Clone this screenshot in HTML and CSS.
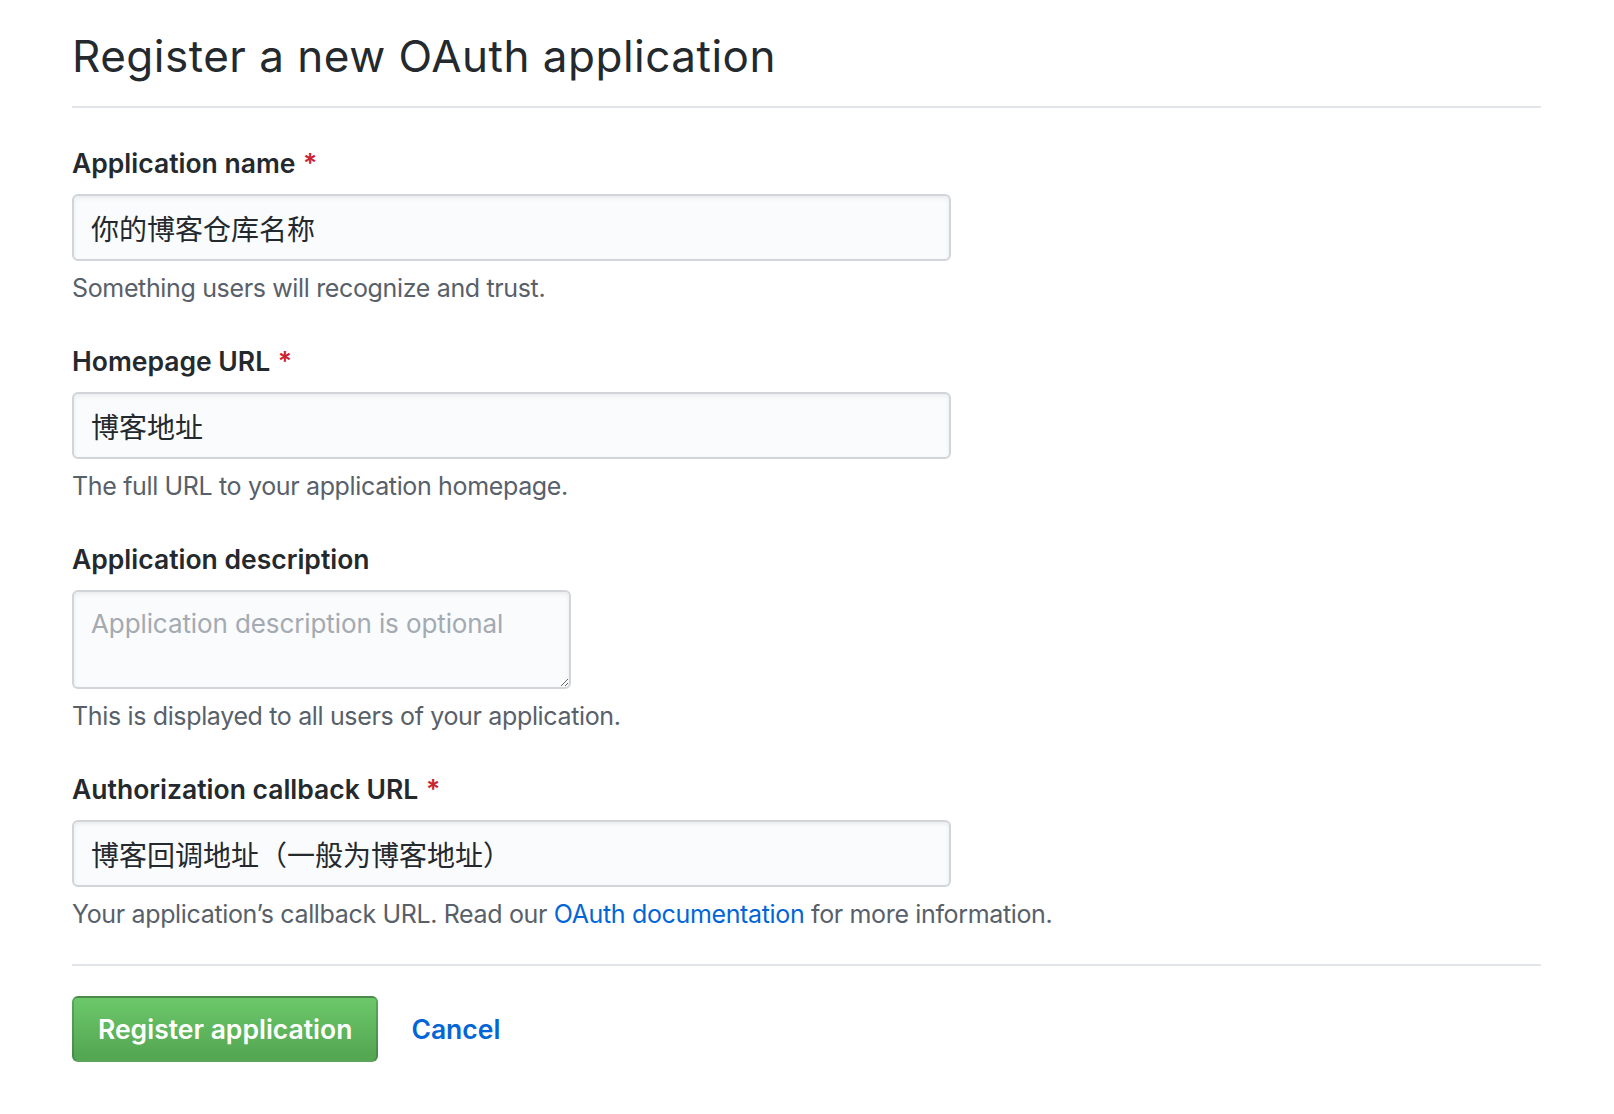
FILE: index.html
```html
<!DOCTYPE html>
<html lang="en">
<head>
<meta charset="utf-8">
<title>Register a new OAuth application</title>
<link rel="stylesheet" href="styles.css">
</head>
<body>
<div class="page">
  <h1 class="title">Register a new OAuth application</h1>
  <form class="form">
    <div class="field">
      <label class="label">Application name <span class="req">*</span></label>
      <input class="input" type="text" value="你的博客仓库名称">
      <p class="note">Something users will recognize and trust.</p>
    </div>
    <div class="field">
      <label class="label">Homepage URL <span class="req">*</span></label>
      <input class="input" type="text" value="博客地址">
      <p class="note">The full URL to your application homepage.</p>
    </div>
    <div class="field">
      <label class="label">Application description</label>
      <textarea class="textarea" placeholder="Application description is optional"></textarea>
      <p class="note">This is displayed to all users of your application.</p>
    </div>
    <div class="field field-last">
      <label class="label">Authorization callback URL <span class="req">*</span></label>
      <input class="input" type="text" value="博客回调地址（一般为博客地址）">
      <p class="note">Your application’s callback URL. Read our <a class="link" href="#">OAuth documentation</a> for more information.</p>
    </div>
    <div class="actions">
      <button class="btn-primary" type="button">Register application</button>
      <a class="cancel" href="#">Cancel</a>
    </div>
  </form>
</div>
</body>
</html>
```

FILE: styles.css
```css
* { box-sizing: border-box; }

html, body {
  margin: 0;
  padding: 0;
  background: #ffffff;
}

body {
  font-family: Inter, "Noto Sans CJK SC", sans-serif;
  color: #24292e;
}

.page {
  width: 1469px;
  margin-left: 72px;
  padding-top: 28px;
}

.title {
  margin: 0;
  font-size: 44px;
  letter-spacing: 0.5px;
  line-height: 56px;
  font-weight: 400;
  color: #24292e;
  padding-bottom: 22px;
  border-bottom: 2px solid #e1e4e8;
}

.form {
  padding-top: 35px;
}

.field {
  margin-bottom: 35px;
}

.field-last {
  margin-bottom: 0;
}

.label {
  display: block;
  font-size: 26.5px;
  line-height: 40px;
  font-weight: 600;
  color: #24292e;
  margin-bottom: 11px;
}

.req {
  color: #cb2431;
  margin-left: 1px;
}

.input,
.textarea {
  display: block;
  font-family: Inter, "Noto Sans CJK SC", sans-serif;
  line-height: 40px;
  color: #24292e;
  background: #fafbfc;
  border: 2px solid #d1d5da;
  border-radius: 6px;
  box-shadow: inset 0 2px 4px rgba(27, 31, 35, 0.075);
  outline: none;
}

.input {
  width: 879px;
  height: 67px;
  font-size: 28px;
  padding: 11px 17px;
}

.textarea {
  width: 499px;
  height: 99px;
  font-size: 26px;
  letter-spacing: -0.1px;
  padding: 12px 17px 11px;
  resize: both;
}

.textarea::placeholder {
  color: #a3aab1;
}

.note {
  margin: 9px 0 0 0;
  font-size: 25px;
  letter-spacing: -0.35px;
  line-height: 36px;
  color: #586069;
}

.link {
  color: #0366d6;
  text-decoration: none;
}

.actions {
  margin-top: 32px;
  border-top: 2px solid #e1e4e8;
  padding-top: 30px;
  display: flex;
  align-items: center;
}

.btn-primary {
  height: 66px;
  padding: 0 24px;
  font-family: Inter, sans-serif;
  font-size: 26.5px;
  font-weight: 600;
  color: #ffffff;
  background-color: #5cb85a;
  background-image: linear-gradient(180deg, #6cc86a 0%, #55a853 90%);
  border: 2px solid rgba(27, 31, 35, 0.2);
  border-radius: 6px;
}

.cancel {
  margin-left: 33px;
  font-size: 26.5px;
  font-weight: 600;
  color: #0366d6;
  text-decoration: none;
}
```
